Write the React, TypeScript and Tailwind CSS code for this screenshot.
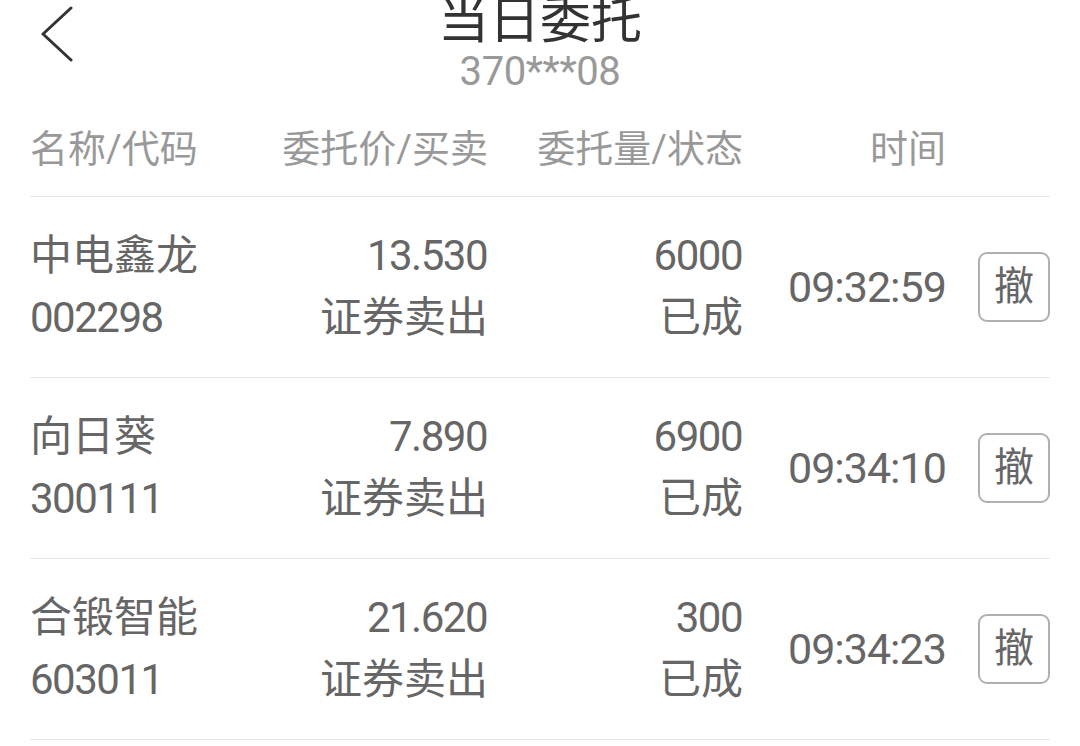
import React from "react";

type Order = {
  name: string;
  code: string;
  price: string;
  side: string;
  qty: string;
  status: string;
  time: string;
};

const orders: Order[] = [
  { name: "中电鑫龙", code: "002298", price: "13.530", side: "证券卖出", qty: "6000", status: "已成", time: "09:32:59" },
  { name: "向日葵", code: "300111", price: "7.890", side: "证券卖出", qty: "6900", status: "已成", time: "09:34:10" },
  { name: "合锻智能", code: "603011", price: "21.620", side: "证券卖出", qty: "300", status: "已成", time: "09:34:23" },
];

const font = "font-['Roboto','Noto_Sans_CJK_SC',sans-serif]";

function OrderRow({ order }: { order: Order }) {
  return (
    <div className={`flex items-center h-[181px] border-b-[1.5px] border-[#e6e6e6] text-[42px] text-[#666] ${font}`}>
      <div className="w-[230px]">
        <div className="h-[62px] leading-[62px] whitespace-nowrap">{order.name}</div>
        <div className="h-[62px] leading-[62px] tracking-[-1.5px]">{order.code}</div>
      </div>
      <div className="w-[228px] text-right">
        <div className="h-[62px] leading-[62px] tracking-[-1.5px] pr-[1px]">{order.price}</div>
        <div className="h-[62px] leading-[62px] whitespace-nowrap">{order.side}</div>
      </div>
      <div className="w-[255px] text-right">
        <div className="h-[62px] leading-[62px] tracking-[-1.5px] pr-[1px]">{order.qty}</div>
        <div className="h-[62px] leading-[62px]">{order.status}</div>
      </div>
      <div className="flex-1 pl-[45px] whitespace-nowrap text-[43px] tracking-[-1px]">{order.time}</div>
      <button className="w-[72px] h-[70px] flex items-center justify-center border-2 border-[#b0b0b0] rounded-[9px] text-[40px] text-[#666] leading-none">
        撤
      </button>
    </div>
  );
}

export default function App() {
  return (
    <div className={`w-[1080px] h-[746px] bg-white overflow-hidden ${font}`}>
      <div className="relative h-[92px] flex flex-col items-center">
        <button className="absolute left-[36px] top-[4px] w-[40px] h-[60px] flex items-center justify-center">
          <svg width="34" height="58" viewBox="0 0 34 58" fill="none">
            <path d="M32 3 L4 29 L32 55" stroke="#333" strokeWidth="3" strokeLinecap="round" strokeLinejoin="round" />
          </svg>
        </button>
        <div className="-mt-[9px] h-[50px] leading-[50px] text-[51px] text-[#333] font-['Noto_Sans_CJK_SC',sans-serif]">当日委托</div>
        <div className="mt-[11px] h-[40px] leading-[40px] text-[40px] text-[#999] tracking-[-0.4px]">370***08</div>
      </div>
      <div className="px-[30px]">
        <div className="flex items-center h-[105px] pt-[10px] border-b-[1.5px] border-[#e6e6e6] text-[38px] text-[#999]">
          <div className="w-[230px] whitespace-nowrap">名称/代码</div>
          <div className="w-[228px] text-right whitespace-nowrap">委托价/买卖</div>
          <div className="w-[255px] text-right whitespace-nowrap">委托量/状态</div>
          <div className="flex-1 pl-[127px]">时间</div>
        </div>
        {orders.map((o) => (
          <OrderRow key={o.code} order={o} />
        ))}
      </div>
    </div>
  );
}
